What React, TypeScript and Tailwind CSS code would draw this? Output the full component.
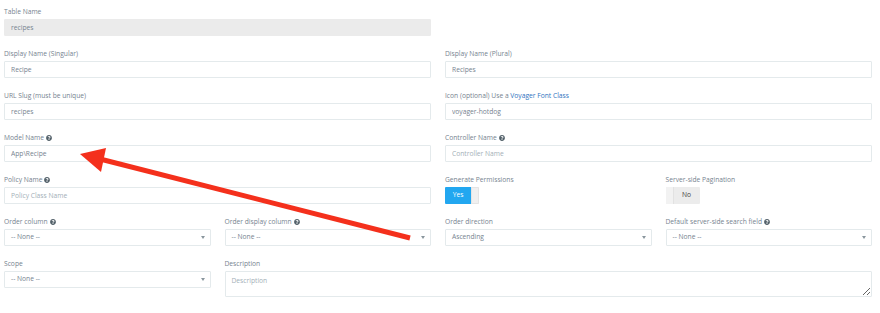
import React from "react";
import { FaQuestionCircle } from "react-icons/fa";

const labelCls =
  "flex items-end gap-[2px] h-[11px] leading-[10px] mb-[2px] text-[6.7px] text-[#76838f] whitespace-nowrap";
const inputBase =
  "block w-full h-[17px] border rounded-[1px] px-[6px] text-[6.7px] text-[#76838f] placeholder:text-[#a3afb7] outline-none";

function Help() {
  return <FaQuestionCircle className="text-[#526069] mb-[2px]" size={6} />;
}

function Label({ children, help }: { children: React.ReactNode; help?: boolean }) {
  return (
    <div className={labelCls}>
      <span>{children}</span>
      {help && <Help />}
    </div>
  );
}

function TextField({
  label,
  value,
  placeholder,
  help,
  disabled,
  span,
}: {
  label: React.ReactNode;
  value?: string;
  placeholder?: string;
  help?: boolean;
  disabled?: boolean;
  span?: string;
}) {
  return (
    <div className={span}>
      <Label help={help}>{label}</Label>
      <input
        className={
          inputBase +
          (disabled ? " bg-[#ebebeb] border-[#ebebeb]" : " bg-white border-[#e4eaec]")
        }
        defaultValue={value}
        placeholder={placeholder}
        disabled={disabled}
      />
    </div>
  );
}

function SelectField({ label, value, help }: { label: string; value: string; help?: boolean }) {
  return (
    <div>
      <Label help={help}>{label}</Label>
      <div className="flex items-center justify-between h-[17px] border border-[#e4eaec] rounded-[1px] bg-white pl-[6px] pr-[5px] text-[6.7px] text-[#76838f]">
        <span>{value}</span>
        <svg width="4" height="3" viewBox="0 0 4 3">
          <polygon points="0,0 4,0 2,3" fill="#8a969e" />
        </svg>
      </div>
    </div>
  );
}

export default function App() {
  return (
    <div className="relative w-[880px] h-[313px] bg-white overflow-hidden font-['Open_Sans','Noto_Sans',sans-serif]">
      <div className="grid grid-cols-4 gap-x-[14px] gap-y-[12px] pl-[4px] pt-[6px] pr-[8px]">
        <TextField span="col-span-2" label="Table Name" value="recipes" disabled />
        <div className="col-span-2" />

        <TextField span="col-span-2" label="Display Name (Singular)" value="Recipe" />
        <TextField span="col-span-2" label="Display Name (Plural)" value="Recipes" />

        <TextField span="col-span-2" label="URL Slug (must be unique)" value="recipes" />
        <TextField
          span="col-span-2"
          label={
            <>
              Icon (optional) Use a <span className="text-[#2f74c0]">Voyager Font Class</span>
            </>
          }
          value="voyager-hotdog"
        />

        <TextField span="col-span-2" label="Model Name" value="App\Recipe" help />
        <TextField span="col-span-2" label="Controller Name" placeholder="Controller Name" help />

        <TextField span="col-span-2" label="Policy Name" placeholder="Policy Class Name" help />
        <div>
          <Label>Generate Permissions</Label>
          <div className="flex h-[17px] w-[34px] rounded-[1px] overflow-hidden text-[6.7px]">
            <div className="flex w-[26px] items-center justify-center bg-[#22a7f0] text-white">Yes</div>
            <div className="w-[8px] bg-[#f0f0f0] border border-[#e4e4e4]" />
          </div>
        </div>
        <div>
          <Label>Server-side Pagination</Label>
          <div className="flex h-[17px] w-[34px] rounded-[1px] overflow-hidden text-[6.7px] bg-[#ececec]">
            <div className="w-[8px] bg-[#f2f2f2] border-r border-[#e2e2e2]" />
            <div className="flex w-[26px] items-center justify-center text-[#444]">No</div>
          </div>
        </div>

        <SelectField label="Order column" value="-- None --" help />
        <SelectField label="Order display column" value="-- None --" help />
        <SelectField label="Order direction" value="Ascending" />
        <SelectField label="Default server-side search field" value="-- None --" help />

        <SelectField label="Scope" value="-- None --" />
        <div className="col-span-3">
          <Label>Description</Label>
          <textarea
            className="block w-full h-[26px] border border-[#e4eaec] rounded-[1px] bg-white px-[6px] pt-[4px] text-[6.7px] leading-[9px] text-[#76838f] placeholder:text-[#a3afb7] outline-none"
            placeholder="Description"
          />
        </div>
      </div>

      <svg
        className="absolute left-0 top-0 pointer-events-none"
        width="880"
        height="313"
        viewBox="0 0 880 313"
      >
        <line x1="410" y1="238" x2="100" y2="159" stroke="#f4301c" strokeWidth="5" />
        <polygon points="80,154 106,148 101,172" fill="#f4301c" />
      </svg>
    </div>
  );
}
